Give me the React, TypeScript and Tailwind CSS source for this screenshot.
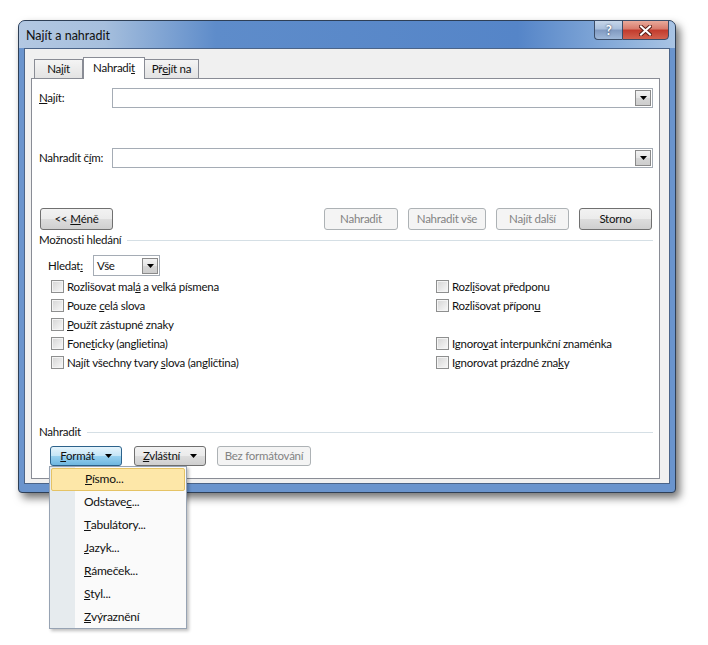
import type { ReactNode } from 'react'

function Arrow({ className = '' }: { className?: string }) {
  return (
    <svg width="7" height="4" viewBox="0 0 7 4" className={className}>
      <path d="M0 0h7L3.5 4z" fill="#000" />
    </svg>
  )
}

function DropButton() {
  return (
    <span className="mr-px flex h-[16px] w-[16px] items-center justify-center border border-[#8a8a8a] bg-[linear-gradient(#f2f2f2,#e4e4e4_50%,#d6d6d6_50%,#cdcdcd)]">
      <Arrow />
    </span>
  )
}

function Combo({ value = '', className = '' }: { value?: string; className?: string }) {
  return (
    <div className={`flex items-center border border-[#a5acb5] bg-white ${className}`}>
      <span className="flex-1 pl-[3px]">{value}</span>
      <DropButton />
    </div>
  )
}

type BtnProps = { children: ReactNode; className?: string; disabled?: boolean; hot?: boolean }

function Button({ children, className = '', disabled, hot }: BtnProps) {
  const look = disabled
    ? 'border-[#adb2b5] bg-[#f4f4f4] text-[#838383]'
    : hot
      ? 'border-[#2c628b] bg-[linear-gradient(#e5f4fc,#c4e5f6_50%,#98d1ef_50%,#6fb7e0)]'
      : 'border-[#707070] bg-[linear-gradient(#f2f2f2,#ebebeb_50%,#dddddd_50%,#cfcfcf)]'
  return (
    <div className={`flex items-center justify-center rounded-[3px] border ${look} ${className}`}>
      {children}
    </div>
  )
}

function Check({ label }: { label: ReactNode }) {
  return (
    <div className="flex h-[19px] items-center gap-[3px]">
      <span className="h-[13px] w-[13px] border border-[#8e8f8f] bg-[linear-gradient(135deg,#d4d4d4,#f9f9f9)] shadow-[inset_0_0_0_1px_#f4f4f4]" />
      <span>{label}</span>
    </div>
  )
}

function GroupHeader({ title, className = '' }: { title: string; className?: string }) {
  return (
    <div className={`flex h-[16px] items-center pl-[7px] pr-[6px] ${className}`}>
      <span>{title}</span>
      <span className="ml-[6px] h-px flex-1 bg-[#d5dfe5]" />
    </div>
  )
}

const menuItems: ReactNode[] = [
  <><u>P</u>ísmo...</>,
  <>Odstave<u>c</u>...</>,
  <><u>T</u>abulátory...</>,
  <><u>J</u>azyk...</>,
  <><u>R</u>ámeček...</>,
  <><u>S</u>tyl...</>,
  <><u>Z</u>výraznění</>,
]

export default function App() {
  return (
    <div className="relative h-[645px] w-[708px] bg-white pl-[18px] pt-[20px] font-['Lato','Noto_Sans',sans-serif] text-[11.5px] leading-none tracking-[-0.25px] text-[#111]">
      {/* window frame */}
      <div className="flex h-[473px] w-[658px] flex-col rounded-t-[7px] rounded-b-[4px] border border-[#2e3f56] bg-[#6a94cd] shadow-[4px_5px_8px_rgba(0,0,0,0.55)]">
        {/* title bar */}
        <div className="flex h-[27px] items-start rounded-t-[6px] bg-[linear-gradient(to_right,#b3c8e2_0%,#a6bfdd_13%,#5e8cca_30%,#5585c8_76%,#8fb2dc_93%,#a9c4e4_100%)]">
          <span className="pl-[7px] pt-[9px] text-[12.5px] tracking-normal">Najít a nahradit</span>
          <div className="ml-auto mr-[6px] -mt-px flex">
            <div className="flex h-[20px] w-[28px] items-center justify-center rounded-bl-[4px] border border-r-0 border-[#3b4d68] bg-[linear-gradient(#c6d6e9,#a8bedb_45%,#8099c0_50%,#9fb8d9)] text-[13px] font-bold text-white [text-shadow:0_0_2px_#1d2e47]">
              ?
            </div>
            <div className="flex h-[20px] w-[47px] items-center justify-center rounded-br-[4px] border border-[#3b4d68] bg-[linear-gradient(#e9aa9b,#d87a6b_45%,#c23a2c_50%,#d2624f)]">
              <svg width="13" height="11" viewBox="0 0 13 11">
                <path d="M2 1.5l9 8M11 1.5l-9 8" stroke="#5a1d16" strokeWidth="4" strokeLinecap="square" />
                <path d="M2 1.5l9 8M11 1.5l-9 8" stroke="#fff" strokeWidth="2" strokeLinecap="square" />
              </svg>
            </div>
          </div>
        </div>

        {/* client area */}
        <div className="mx-[5px] flex h-[436px] flex-col border border-[#4b6488] bg-[#f0f0f0] pb-[4px] pl-[6px] pr-[9px] pt-[8px]">
          {/* tabs */}
          <div className="flex h-[21px] items-end pl-[3px]">
            <div className="flex h-[19px] w-[49px] items-center justify-center border border-b-0 border-[#898c95] bg-[linear-gradient(#f4f4f4,#e3e3e3)]">
              Na<u>j</u>ít
            </div>
            <div className="relative z-10 -mb-px flex h-[22px] w-[62px] items-center justify-center border border-b-0 border-[#898c95] bg-white pb-[2px]">
              Nahradi<u>t</u>
            </div>
            <div className="flex h-[19px] w-[54px] items-center justify-center border border-b-0 border-l-0 border-[#898c95] bg-[linear-gradient(#f4f4f4,#e3e3e3)]">
              Př<u>e</u>jít na
            </div>
          </div>

          {/* tab panel */}
          <div className="flex flex-1 flex-col border border-[#898c95] bg-white">
            <div className="mt-[9px] flex items-center pl-[7px] pr-[6px]">
              <span className="w-[73px]"><u>N</u>ajít:</span>
              <Combo className="h-[20px] flex-1" />
            </div>
            <div className="mt-[40px] flex items-center pl-[7px] pr-[6px]">
              <span className="w-[73px]">Nahradit č<u>í</u>m:</span>
              <Combo className="h-[20px] flex-1" />
            </div>

            <div className="mt-[40px] flex h-[22px] pl-[8px] pr-[7px]">
              <Button className="w-[73px]">
                &lt;&lt; <u className="ml-[3px]">M</u>éně
              </Button>
              <div className="ml-auto flex gap-[10px]">
                <Button disabled className="w-[74px]">Nahradit</Button>
                <Button disabled className="w-[78px]">Nahradit vše</Button>
                <Button disabled className="w-[73px]">Najít další</Button>
                <Button className="w-[73px]">Storno</Button>
              </div>
            </div>

            <GroupHeader title="Možnosti hledání" className="mt-[2px]" />

            <div className="mt-[7px] flex items-center pl-[16px]">
              <span className="w-[45px]">Hledat<u>:</u></span>
              <Combo value="Vše" className="h-[21px] w-[67px]" />
            </div>

            <div className="mt-px flex pl-[19px]">
              <div className="flex w-[385px] flex-col">
                <Check label={<>Rozlišovat mal<u>á</u> a velká písmena</>} />
                <Check label={<>Pouze <u>c</u>elá slova</>} />
                <Check label={<><u>P</u>oužít zástupné znaky</>} />
                <Check label={<>Fone<u>t</u>icky (anglietina)</>} />
                <Check label={<>Najít všechny tvary <u>s</u>lova (angličtina)</>} />
              </div>
              <div className="flex flex-col">
                <Check label={<>Rozl<u>i</u>šovat předponu</>} />
                <Check label={<>Rozlišovat přípon<u>u</u></>} />
                <div className="h-[19px]" />
                <Check label={<>Ignoro<u>v</u>at interpunkční znaménka</>} />
                <Check label={<>Ignorovat prázdné zna<u>k</u>y</>} />
              </div>
            </div>

            <GroupHeader title="Nahradit" className="mt-[52px]" />

            <div className="mt-[6px] flex h-[20px] pl-[18px]">
              <Button hot className="w-[72px] gap-[10px]">
                <span><u>F</u>ormát</span>
                <Arrow />
              </Button>
              <Button className="ml-[12px] w-[72px] gap-[10px]">
                <span><u>Z</u>vláštní</span>
                <Arrow />
              </Button>
              <Button disabled className="ml-[11px] w-[94px]">Bez formátování</Button>
            </div>
          </div>
        </div>
      </div>

      {/* Formát dropdown menu */}
      <div className="absolute left-[49px] top-[466px] flex h-[163px] w-[138px] flex-col border border-[#97a3b3] bg-[linear-gradient(to_right,#e6ebee_0px,#e6ebee_25px,#fafafa_25px)] pt-px text-[12px] shadow-[2px_2px_3px_rgba(0,0,0,0.25)]">
        {menuItems.map((item, i) => (
          <div
            key={i}
            className={`mx-px flex h-[23px] items-center pl-[33px] ${i === 0 ? 'rounded-[2px] border border-[#e5c365] bg-[#fde7a8]' : ''}`}
          >
            {item}
          </div>
        ))}
      </div>
    </div>
  )
}
